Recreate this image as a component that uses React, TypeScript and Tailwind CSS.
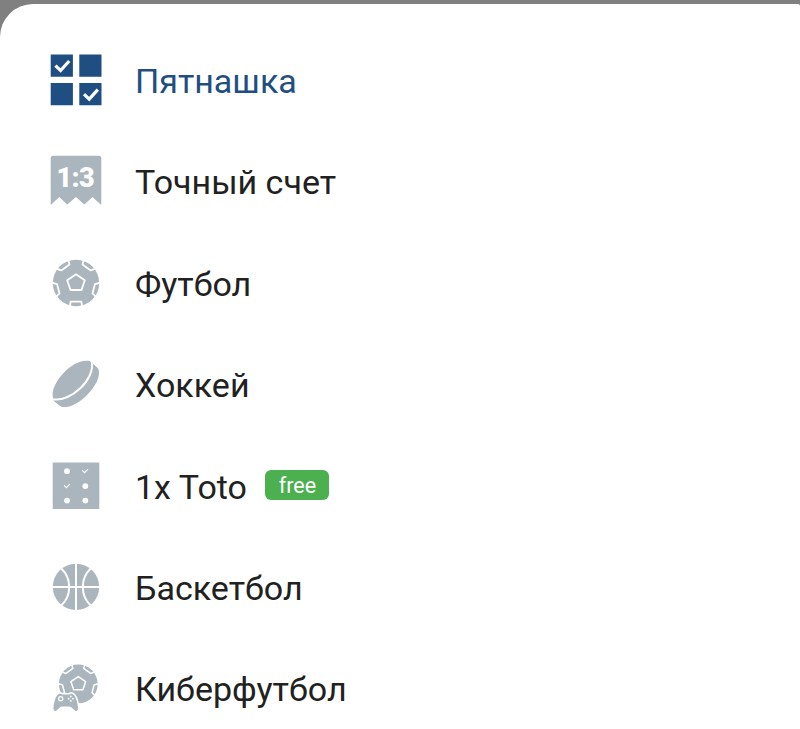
import type { ReactNode } from "react";

type TotoItem = {
  title: string;
  icon: ReactNode;
  active?: boolean;
  badge?: string;
};

const GREY = "#abb5bd";

function FifteenIcon() {
  return (
    <>
      <path
        fill="#1f4f82"
        d="M2.7 2.6h22.2v22.2H2.7zM31.3 2.6h22.2v22.2H31.3zM2.7 31.1h22.2v22.2H2.7zM31.3 31.1h22.2v22.2H31.3z"
      />
      <path
        fill="none"
        stroke="#fff"
        strokeWidth="3.2"
        d="M7.4 13.6l5.2 4.9L21.2 9M36 42.2l5.2 4.9 8.6-9.5"
      />
    </>
  );
}

function ScoreIcon() {
  return (
    <>
      <path
        fill={GREY}
        d="M5.2 2.8h45.6a2.5 2.5 0 0 1 2.5 2.5v46.2h-.6l-8.2-7.6-8.2 7.6-8.4-7.6-8.7 7.6-8-7.6-7.9 7.6h-.6V5.3a2.5 2.5 0 0 1 2.5-2.5z"
      />
      <text
        x="27.6"
        y="33.7"
        fill="#fff"
        textAnchor="middle"
        textLength="38"
        className="font-[Roboto] text-[27px] font-black"
      >
        1:3
      </text>
    </>
  );
}

function Ball({ bottomPatch = true }: { bottomPatch?: boolean }) {
  return (
    <>
      <circle cx="28" cy="28" r="23.2" fill={GREY} />
      <g fill="none" stroke="#fff" strokeWidth="1.8" strokeLinejoin="round">
        <path d="M28 19.2l8.8 6.1-3.3 9.7h-11l-3.3-9.7z" />
        <path d="M35.7 5l-1.2 4.4 8.2 6 4.2-1.6M20.3 5l1.2 4.4-8.2 6-4.2-1.6" />
        <path d="M51.4 27.8l-4.5 1.4-2.4 9.2 3 2.9M4.6 27.8l4.5 1.4 2.4 9.2-3 2.9" />
        {bottomPatch && <path d="M21.9 51.3l.8-4.6h10.6l.8 4.6" />}
      </g>
    </>
  );
}

function PuckIcon() {
  return (
    <>
      <path
        fill={GREY}
        d="M4.7 40C3.4 27.5 22 4.8 38.4 4.8c2.2 0 3.8.5 4.9 1.2l6.6 6.2c1.4 1.8 1.6 6.5-.2 11.2C44.6 36 29 51 16.2 51.1c-1.5 0-2.8-.4-4-1.2l-5.6-4.2c-1.2-1.4-1.8-3.4-1.9-5.7z"
      />
      <path
        fill="none"
        stroke="#fff"
        strokeWidth="2"
        d="M5.2 43.2C22 46.5 48 23.5 43.6 5"
      />
    </>
  );
}

function TotoIcon() {
  return (
    <>
      <path fill={GREY} d="M4.7 4.4h46.6V51H4.7z" />
      <g fill="#fff">
        <circle cx="19" cy="13.2" r="2.9" />
        <circle cx="37.3" cy="28.1" r="2.9" />
        <circle cx="19" cy="42.6" r="2.9" />
        <circle cx="37.3" cy="42.6" r="2.9" />
      </g>
      <path
        fill="none"
        stroke="#fff"
        strokeWidth="1.2"
        d="M34.3 12.4l2.3 2.3 3.4-3.5M16.1 27.4l2.3 2.3 3.4-3.5"
      />
    </>
  );
}

function BasketballIcon() {
  return (
    <>
      <circle cx="28" cy="27.9" r="23.2" fill={GREY} />
      <path
        fill="none"
        stroke="#fff"
        strokeWidth="2"
        d="M28 4v48M4 27.9h48M13.3 9.4c10.5 9.8 10.5 27.2 0 37M42.7 9.4c-10.5 9.8-10.5 27.2 0 37"
      />
    </>
  );
}

function CyberIcon() {
  return (
    <>
      <g transform="translate(6.9 .6) scale(.835)">
        <Ball bottomPatch={false} />
      </g>
      <path
        fill={GREY}
        stroke="#fff"
        strokeWidth="1.5"
        d="M11.2 32.9c1.6-.4 2.4.9 4 .9h5c1.6 0 2.4-1.3 4-.9 3.4.8 4.4 4.4 5.4 8.2 1 3.9 2.2 9.4-.5 10.6-2.9 1.2-4.7-4.4-7.6-4.4h-7.6c-2.9 0-4.7 5.6-7.6 4.4-2.7-1.2-1.5-6.7-.5-10.6 1-3.8 2-7.4 5.4-8.2z"
      />
      <circle cx="12.7" cy="38.8" r="2.1" fill="none" stroke="#fff" strokeWidth="1.2" />
      <g fill="#fff">
        <circle cx="22.8" cy="36.5" r=".9" />
        <circle cx="22.8" cy="40.9" r=".9" />
        <circle cx="20.6" cy="38.7" r=".9" />
        <circle cx="25" cy="38.7" r=".9" />
      </g>
    </>
  );
}

const items: TotoItem[] = [
  { title: "Пятнашка", icon: <FifteenIcon />, active: true },
  { title: "Точный счет", icon: <ScoreIcon /> },
  { title: "Футбол", icon: <Ball /> },
  { title: "Хоккей", icon: <PuckIcon /> },
  { title: "1x Toto", icon: <TotoIcon />, badge: "free" },
  { title: "Баскетбол", icon: <BasketballIcon /> },
  { title: "Киберфутбол", icon: <CyberIcon /> },
];

function TotoRow({ item }: { item: TotoItem }) {
  return (
    <li className="flex h-[101.4px] items-center pl-12">
      <svg viewBox="0 0 56 56" className="size-14 shrink-0" aria-hidden>
        {item.icon}
      </svg>
      <span
        className={`ml-[31px] pt-[2px] text-[34px] leading-none whitespace-nowrap ${
          item.active ? "text-[#1f4f82]" : "text-[#212121]"
        }`}
      >
        {item.title}
      </span>
      {item.badge && (
        <span className="mb-[2px] ml-[18.5px] flex h-[30px] w-16 items-center justify-center rounded-md bg-[#4caf50] pt-[3px] text-[21.5px] leading-none text-white">
          {item.badge}
        </span>
      )}
    </li>
  );
}

export default function App() {
  return (
    <div className="h-[729px] overflow-hidden bg-[#808080] pt-1 font-[Roboto,sans-serif]">
      <ul className="h-full rounded-tl-[33px] rounded-tr-[2px] bg-white pt-[25.3px]">
        {items.map((item) => (
          <TotoRow key={item.title} item={item} />
        ))}
      </ul>
    </div>
  );
}
